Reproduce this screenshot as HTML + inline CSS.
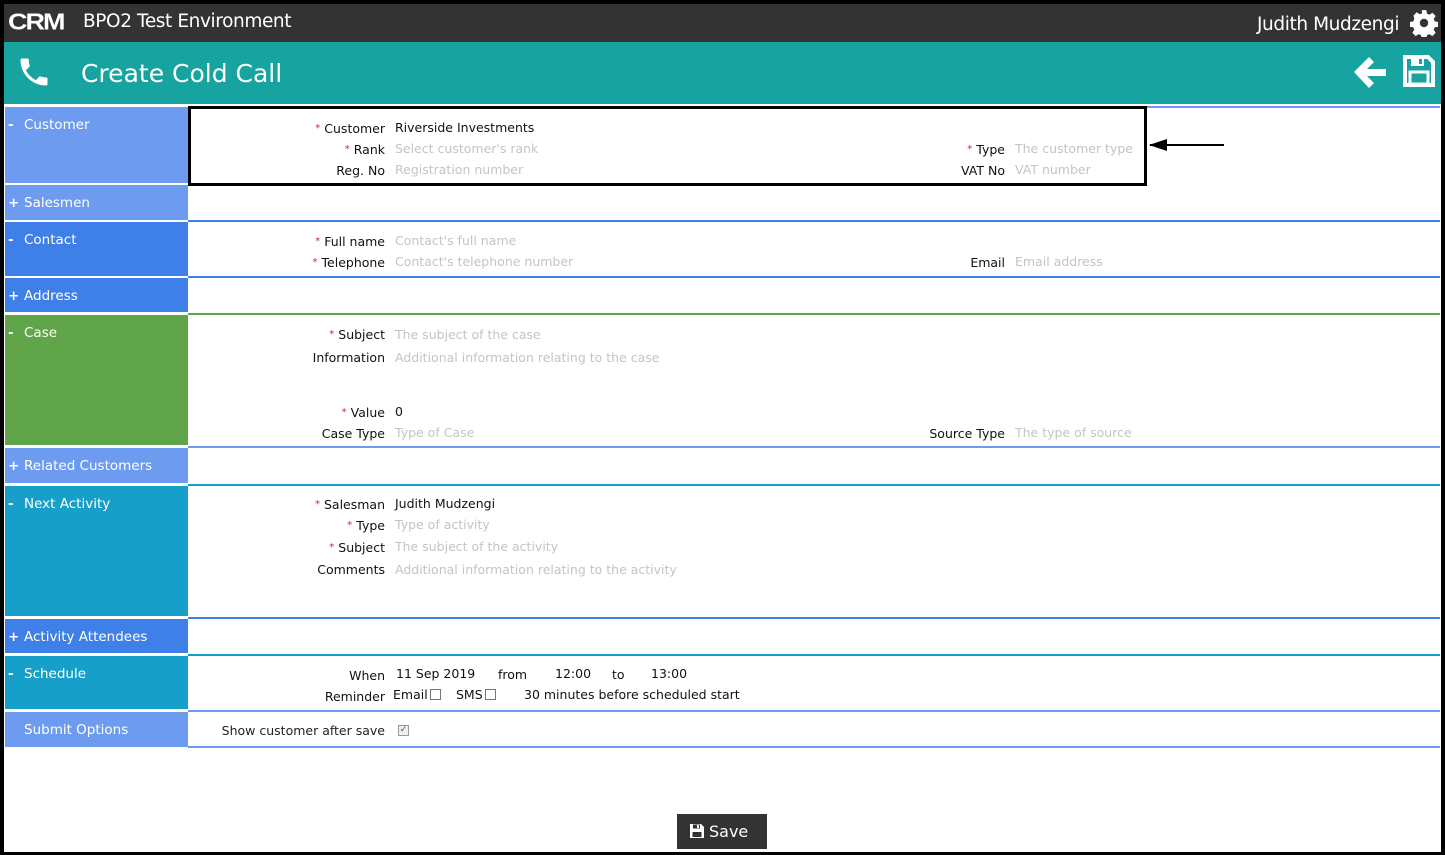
<!DOCTYPE html>
<html><head><meta charset="utf-8">
<style>
*{margin:0;padding:0;box-sizing:border-box}
body{width:1445px;height:855px;position:relative;background:#fff;font-family:"DejaVu Sans","Liberation Sans",sans-serif;font-size:12.5px;color:#111;overflow:hidden}
.a{position:absolute}
.frame{position:absolute;left:0;top:0;width:1445px;height:855px;border:solid #000;border-width:4px 4px 3px 4px;pointer-events:none}
.side{position:absolute;left:5px;width:183px;color:#fff;font-size:13.5px;padding:10px 0 0 3px;line-height:16px}
.side span{display:inline-block;width:16px;font-weight:bold}
.line{position:absolute;left:188px;width:1252px;height:2px}
.lb{position:absolute;text-align:right;white-space:nowrap;line-height:14px;margin-top:1px}
.lb i{color:#e02020;font-style:normal;font-size:10px;vertical-align:top;margin-right:4px}
.v{position:absolute;white-space:nowrap;line-height:14px;margin-top:1px}
.ph{color:#c4c4c4}
.cb{display:inline-block;width:11px;height:11px;border:1px solid #777;vertical-align:-1px;margin-left:2px;background:#fff}
</style></head><body>
<div class="a" style="left:4px;top:4px;width:1438px;height:38px;background:#333"></div>
<div class="a" style="left:8px;top:8px;color:#fff;font-family:'Liberation Sans',sans-serif;font-weight:bold;font-size:27px;letter-spacing:-2px;line-height:28px;transform:scaleY(0.85)">CRM</div>
<div class="a" style="left:83px;top:11px;color:#fff;font-size:18.5px;line-height:22px;letter-spacing:-0.4px">BPO2 Test Environment</div>
<div class="a" style="left:1257px;top:14px;color:#fff;font-size:18.5px;line-height:22px;letter-spacing:-0.4px">Judith Mudzengi</div>
<svg class="a" style="left:1410px;top:9px" width="28" height="28" viewBox="0 0 24 24"><path fill="#fff" d="M10 1h4l.6 3 2 .9 2.6-1.7 2.8 2.8-1.7 2.6.9 2 3 .6v4l-3 .6-.9 2 1.7 2.6-2.8 2.8-2.6-1.7-2 .9-.6 3h-4l-.6-3-2-.9-2.6 1.7-2.8-2.8 1.7-2.6-.9-2-3-.6v-4l3-.6.9-2L3 5.6l2.8-2.8 2.6 1.7 2-.9z"/><circle cx="12" cy="12" r="3.6" fill="#333"/></svg>
<div class="a" style="left:4px;top:42px;width:1438px;height:62px;background:#17a39f"></div>
<svg class="a" style="left:16px;top:54px" width="36" height="36" viewBox="0 0 24 24"><path fill="#fff" d="M6.6 10.8c1.4 2.8 3.8 5.1 6.6 6.6l2.2-2.2c.3-.3.7-.4 1-.2 1.1.4 2.3.6 3.6.6.6 0 1 .4 1 1V20c0 .6-.4 1-1 1C10.6 21 3 13.4 3 4c0-.6.4-1 1-1h3.5c.6 0 1 .4 1 1 0 1.3.2 2.5.6 3.6.1.3 0 .7-.2 1z"/></svg>
<div class="a" style="left:81px;top:58px;color:#fff;font-size:25px;line-height:32px">Create Cold Call</div>
<svg class="a" style="left:1352px;top:55px" width="36" height="34" viewBox="0 0 36 34"><path fill="#fff" d="M2 17 17 2l5 5-7 7h19v7H15l7 7-5 5z"/></svg>
<svg class="a" style="left:1402px;top:54px" width="34" height="34" viewBox="0 0 34 34"><path fill="none" stroke="#fff" stroke-width="4" d="M3 3h23l5 5v23H3z"/><rect x="9" y="3" width="13" height="9" fill="#fff"/><rect x="17" y="5" width="3" height="5" fill="#17a39f"/><rect x="8" y="18" width="18" height="12" fill="none" stroke="#fff" stroke-width="3"/></svg>

<div class="side" style="top:107px;height:76px;background:#6d9bf0"><span>-</span>Customer</div>
<div class="side" style="top:185px;height:35px;background:#6d9bf0"><span>+</span>Salesmen</div>
<div class="side" style="top:222px;height:54px;background:#3f7fe8"><span>-</span>Contact</div>
<div class="side" style="top:278px;height:34px;background:#3f7fe8"><span>+</span>Address</div>
<div class="side" style="top:315px;height:130px;background:#61a54a"><span>-</span>Case</div>
<div class="side" style="top:448px;height:35px;background:#6d9bf0"><span>+</span>Related Customers</div>
<div class="side" style="top:486px;height:130px;background:#169fc8"><span>-</span>Next Activity</div>
<div class="side" style="top:619px;height:34px;background:#3f7fe8"><span>+</span>Activity Attendees</div>
<div class="side" style="top:656px;height:53px;background:#169fc8"><span>-</span>Schedule</div>
<div class="side" style="top:712px;height:35px;background:#6d9bf0"><span></span>Submit Options</div>

<div class="line" style="top:106px;background:#6d9bf0"></div>
<div class="line" style="top:184px;background:#fff"></div>
<div class="line" style="top:220px;background:#3f7fe8"></div>
<div class="line" style="top:276px;background:#3f7fe8"></div>
<div class="line" style="top:313px;background:#61a54a"></div>
<div class="line" style="top:446px;background:#6d9bf0"></div>
<div class="line" style="top:484px;background:#169fc8"></div>
<div class="line" style="top:617px;background:#3f7fe8"></div>
<div class="line" style="top:654px;background:#169fc8"></div>
<div class="line" style="top:710px;background:#6d9bf0"></div>
<div class="line" style="top:746px;background:#6d9bf0"></div>

<div class="a" style="left:188px;top:106px;width:959px;height:80px;border:3px solid #000;background:#fff"></div>
<div class="a" style="left:1150px;top:144px;width:74px;height:2px;background:#000"></div>
<svg class="a" style="left:1149px;top:139px" width="20" height="12"><path d="M0 6 18 0v12z" fill="#000"/></svg>

<div class="lb" style="right:1060px;top:121px"><i>*</i>Customer</div><div class="v" style="left:395px;top:120px">Riverside Investments</div>
<div class="lb" style="right:1060px;top:142px"><i>*</i>Rank</div><div class="v ph" style="left:395px;top:141px">Select customer's rank</div>
<div class="lb" style="right:1060px;top:163px">Reg. No</div><div class="v ph" style="left:395px;top:162px">Registration number</div>
<div class="lb" style="right:440px;top:142px"><i>*</i>Type</div><div class="v ph" style="left:1015px;top:141px">The customer type</div>
<div class="lb" style="right:440px;top:163px">VAT No</div><div class="v ph" style="left:1015px;top:162px">VAT number</div>

<div class="lb" style="right:1060px;top:234px"><i>*</i>Full name</div><div class="v ph" style="left:395px;top:233px">Contact's full name</div>
<div class="lb" style="right:1060px;top:255px"><i>*</i>Telephone</div><div class="v ph" style="left:395px;top:254px">Contact's telephone number</div>
<div class="lb" style="right:440px;top:255px">Email</div><div class="v ph" style="left:1015px;top:254px">Email address</div>

<div class="lb" style="right:1060px;top:327px"><i>*</i>Subject</div><div class="v ph" style="left:395px;top:327px">The subject of the case</div>
<div class="lb" style="right:1060px;top:350px">Information</div><div class="v ph" style="left:395px;top:350px">Additional information relating to the case</div>
<div class="lb" style="right:1060px;top:405px"><i>*</i>Value</div><div class="v" style="left:395px;top:404px">0</div>
<div class="lb" style="right:1060px;top:426px">Case Type</div><div class="v ph" style="left:395px;top:425px">Type of Case</div>
<div class="lb" style="right:440px;top:426px">Source Type</div><div class="v ph" style="left:1015px;top:425px">The type of source</div>

<div class="lb" style="right:1060px;top:497px"><i>*</i>Salesman</div><div class="v" style="left:395px;top:496px">Judith Mudzengi</div>
<div class="lb" style="right:1060px;top:518px"><i>*</i>Type</div><div class="v ph" style="left:395px;top:517px">Type of activity</div>
<div class="lb" style="right:1060px;top:540px"><i>*</i>Subject</div><div class="v ph" style="left:395px;top:539px">The subject of the activity</div>
<div class="lb" style="right:1060px;top:562px">Comments</div><div class="v ph" style="left:395px;top:562px">Additional information relating to the activity</div>

<div class="lb" style="right:1060px;top:668px">When</div>
<div class="v" style="left:396px;top:666px">11 Sep 2019</div>
<div class="v" style="left:498px;top:667px">from</div>
<div class="v" style="left:555px;top:666px">12:00</div>
<div class="v" style="left:612px;top:667px">to</div>
<div class="v" style="left:651px;top:666px">13:00</div>
<div class="lb" style="right:1060px;top:689px">Reminder</div>
<div class="v" style="left:393px;top:687px">Email<span class="cb"></span></div>
<div class="v" style="left:456px;top:687px">SMS<span class="cb"></span></div>
<div class="v" style="left:524px;top:687px">30 minutes before scheduled start</div>

<div class="lb" style="right:1060px;top:723px;color:#222">Show customer after save</div>
<div class="a" style="left:398px;top:725px;width:11px;height:11px;border:1px solid #999;background:#eee;font-size:9px;line-height:9px;text-align:center;color:#555">✓</div>

<div class="a" style="left:677px;top:814px;width:90px;height:35px;background:#333;color:#fff;font-size:16px;line-height:35px;padding-left:12px">
<svg style="vertical-align:-2px;margin-right:4px" width="16" height="16" viewBox="0 0 16 16"><path fill="#fff" d="M1 1h11l3 3v11H1z"/><rect x="4" y="1.5" width="7" height="4" fill="#333"/><rect x="8" y="2" width="2" height="3" fill="#fff"/><rect x="3.5" y="9" width="9" height="5" fill="#333"/></svg>Save</div>

<div class="frame"></div>
</body></html>
